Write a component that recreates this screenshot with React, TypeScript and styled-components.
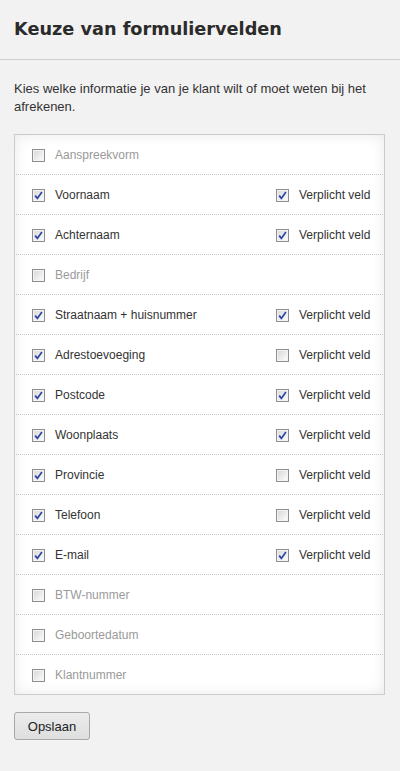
import React from "react";
import styled, { createGlobalStyle } from "styled-components";

const Global = createGlobalStyle`
  html, body { margin: 0; padding: 0; background: #f2f2f2; }
  body { font-family: "Liberation Sans", Arial, sans-serif; color: #333; }
`;

const Page = styled.div`
  width: 400px;
  min-height: 771px;
  background: #f2f2f2;
`;

const Header = styled.header`
  padding: 17px 14px 0 14px;
  height: 42px;
  border-bottom: 1px solid #cfcfcf;
  box-sizing: content-box;
`;

const Title = styled.h1`
  margin: 0;
  font-family: "DejaVu Sans", Verdana, sans-serif;
  font-weight: bold;
  font-size: 17.7px;
  line-height: 24px;
  color: #2b2b2b;
`;

const Content = styled.main`
  padding: 20px 15px 0 14px;
`;

const Intro = styled.p`
  margin: 0 0 18px 0;
  font-size: 13px;
  line-height: 18px;
  color: #333;
`;

const Panel = styled.div`
  border: 1px solid #cbcbcb;
  background: #fff;
  box-shadow: inset 0 0 14px rgba(0, 0, 0, 0.09);
`;

const Row = styled.div`
  display: grid;
  grid-template-columns: 1fr 107px;
  align-items: center;
  height: 39px;
  padding-left: 16px;
  margin: 0 1px;
  & + & {
    border-top: 1px dotted #c4c4c4;
  }
`;

const Field = styled.label<{ $active: boolean }>`
  display: flex;
  align-items: center;
  gap: 10px;
  font-size: 12px;
  color: ${(p) => (p.$active ? "#333" : "#9a9a9a")};
`;

const Box = styled.span`
  display: inline-flex;
  align-items: center;
  justify-content: center;
  width: 11px;
  height: 11px;
  border: 1px solid #8e8e8e;
  background: linear-gradient(135deg, #d6d6d6 0%, #f2f2f2 70%, #ffffff 100%);
  box-shadow: inset 0 0 0 1px #f4f4f4;
  flex: none;
  position: relative;
  top: 1px;
`;

const Button = styled.button`
  display: block;
  margin-top: 17px;
  width: 76px;
  height: 28px;
  border: 1px solid #a9a9a9;
  border-radius: 3px;
  background: linear-gradient(#ececec, #dedede);
  font-family: "Liberation Sans", Arial, sans-serif;
  font-size: 13px;
  color: #222;
  padding: 0;
`;

const Check = ({ checked }: { checked: boolean }) => (
  <Box>
    {checked && (
      <svg width="9" height="9" viewBox="0 0 9 9">
        <path d="M1.2 4.6 L3.4 7.4 L7.9 1" fill="none" stroke="#2d43a3" strokeWidth="1.7" />
      </svg>
    )}
  </Box>
);

type F = { name: string; on: boolean; req?: boolean };

const fields: F[] = [
  { name: "Aanspreekvorm", on: false },
  { name: "Voornaam", on: true, req: true },
  { name: "Achternaam", on: true, req: true },
  { name: "Bedrijf", on: false },
  { name: "Straatnaam + huisnummer", on: true, req: true },
  { name: "Adrestoevoeging", on: true, req: false },
  { name: "Postcode", on: true, req: true },
  { name: "Woonplaats", on: true, req: true },
  { name: "Provincie", on: true, req: false },
  { name: "Telefoon", on: true, req: false },
  { name: "E-mail", on: true, req: true },
  { name: "BTW-nummer", on: false },
  { name: "Geboortedatum", on: false },
  { name: "Klantnummer", on: false },
];

export default function App() {
  return (
    <Page>
      <Global />
      <Header>
        <Title>Keuze van formuliervelden</Title>
      </Header>
      <Content>
        <Intro>Kies welke informatie je van je klant wilt of moet weten bij het afrekenen.</Intro>
        <Panel>
          {fields.map((f) => (
            <Row key={f.name}>
              <Field $active={f.on}>
                <Check checked={f.on} />
                {f.name}
              </Field>
              {f.on ? (
                <Field $active>
                  <Check checked={!!f.req} />
                  Verplicht veld
                </Field>
              ) : (
                <span />
              )}
            </Row>
          ))}
        </Panel>
        <Button>Opslaan</Button>
      </Content>
    </Page>
  );
}
